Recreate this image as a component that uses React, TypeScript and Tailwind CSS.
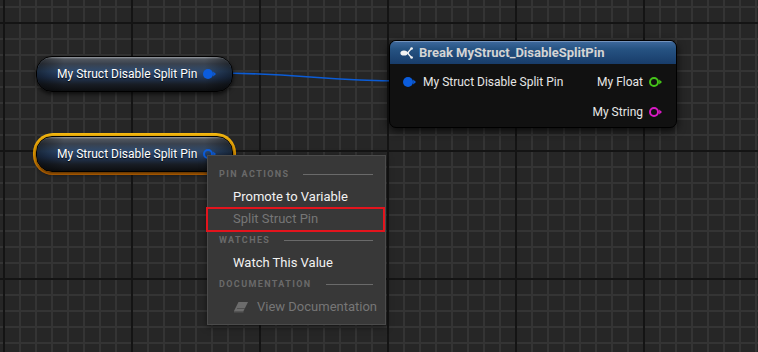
import React from "react";

const W = 758;
const H = 352;

function Grid() {
  const minorV: number[] = [];
  for (let x = 4; x < W; x += 16) minorV.push(x);
  const minorH: number[] = [];
  for (let y = 7; y < H; y += 16) minorH.push(y);
  const majorV = [4, 132, 260, 388, 516, 644];
  const majorH = [23, 151, 279];
  return (
    <svg className="absolute inset-0" width={W} height={H} viewBox={`0 0 ${W} ${H}`}>
      <rect width={W} height={H} fill="#262626" />
      {minorV.map((x) => (
        <rect key={"v" + x} x={x - 1} y={0} width={2} height={H} fill="#343434" />
      ))}
      {minorH.map((y) => (
        <rect key={"h" + y} x={0} y={y - 1} width={W} height={2} fill="#343434" />
      ))}
      {majorV.map((x) => (
        <rect key={"V" + x} x={x - 1} y={0} width={2} height={H} fill="#141414" />
      ))}
      {majorH.map((y) => (
        <rect key={"H" + y} x={0} y={y - 1} width={W} height={2} fill="#141414" />
      ))}
    </svg>
  );
}

function Pin({ color, filled }: { color: string; filled?: boolean }) {
  return (
    <svg width="14" height="12" viewBox="0 0 14 12" className="block shrink-0">
      {filled ? (
        <circle cx="5" cy="6" r="5" fill={color} />
      ) : (
        <circle cx="5" cy="6" r="4" fill="none" stroke={color} strokeWidth="2" />
      )}
      <path d="M10.2 3.6 L13 6 L10.2 8.4 Z" fill={color} />
    </svg>
  );
}

function VarNode({ hollow }: { hollow?: boolean }) {
  return (
    <div className="relative w-[197px] h-[36px] rounded-[16px] border border-black bg-[linear-gradient(180deg,#9a9ea4_0%,#50565e_6%,#3a424e_20%,#2e4a6e_42%,#23395a_58%,#181d25_80%,#0d0e10_100%)] shadow-[0_2px_4px_rgba(0,0,0,0.7)] flex items-center pl-[20px] overflow-hidden">
      <div className="absolute inset-0 rounded-[16px] bg-[linear-gradient(90deg,rgba(0,0,0,0.45)_0%,rgba(0,0,0,0)_14%,rgba(0,0,0,0)_86%,rgba(0,0,0,0.45)_100%)]" />
      <span className="relative text-[12px] leading-none text-white whitespace-nowrap [text-shadow:0_1px_1px_rgba(0,0,0,0.8)]">
        My Struct Disable Split Pin
      </span>
      <span className="relative ml-[6px]">
        <Pin color="#0b5cdc" filled={!hollow} />
      </span>
    </div>
  );
}

function BreakIcon() {
  return (
    <svg width="14" height="14" viewBox="0 0 14 14" className="block shrink-0">
      <ellipse cx="4" cy="7" rx="3.6" ry="2.6" fill="#f2f2f2" />
      <path d="M6.5 7 L8.5 7 M8 6.4 L10.8 3.2 M8 7.6 L10.8 10.8" stroke="#f2f2f2" strokeWidth="1.4" strokeLinecap="round" />
      <circle cx="11.6" cy="2.5" r="1.3" fill="#f2f2f2" />
      <circle cx="11.6" cy="11.5" r="1.3" fill="#f2f2f2" />
    </svg>
  );
}

function BookIcon() {
  return (
    <svg width="16" height="13" viewBox="0 0 16 13" className="block shrink-0">
      <path d="M1 11 L5.5 2 L15 2 L10.5 11 Z" fill="#6c6c6c" />
      <path d="M1 11 L10.5 11 L10.5 12.5 L1 12.5 Z" fill="#555" />
      <path d="M4 8.5 L12 8.5" stroke="#4a4a4a" strokeWidth="0.8" />
    </svg>
  );
}

function SectionHeader({ label }: { label: string }) {
  return (
    <div className="h-[22px] flex items-center pl-[11px] pr-[12px]">
      <span className="text-[9px] font-bold tracking-[1.4px] text-[#6a6a6a] leading-none whitespace-nowrap">{label}</span>
      <div className="flex-1 h-px bg-[#6a6a6a] ml-[14px]" />
    </div>
  );
}

function MenuItem({ label, disabled }: { label: string; disabled?: boolean }) {
  return (
    <div className="h-[22px] flex items-center pl-[25px]">
      <span className={`text-[13px] leading-none whitespace-nowrap ${disabled ? "text-[#767676]" : "text-[#f2f2f2]"}`}>{label}</span>
    </div>
  );
}

export default function App() {
  return (
    <div className="relative w-[758px] h-[352px] overflow-hidden bg-[#262626] font-['Roboto','Noto_Sans',sans-serif]">
      <Grid />

      {/* wire */}
      <svg className="absolute inset-0" width={W} height={H} viewBox={`0 0 ${W} ${H}`}>
        <path d="M214 73 C 300 73, 320 81, 404 81" fill="none" stroke="#0b5cd6" strokeWidth="1.6" />
      </svg>

      {/* node 1 */}
      <div className="absolute left-[36px] top-[56px]">
        <VarNode />
      </div>

      {/* node 2 selected */}
      <div className="absolute left-[33px] top-[133px] w-[203px] h-[42px] rounded-[20px] p-[3px] bg-[linear-gradient(180deg,#f8bb10_0%,#efa000_50%,#e27600_100%)]">
        <VarNode hollow />
      </div>

      {/* break node */}
      <div className="absolute left-[389px] top-[40px] w-[288px] h-[88px] rounded-[7px] border border-black bg-[#111111] shadow-[0_3px_8px_rgba(0,0,0,0.75)] overflow-hidden flex flex-col">
        <div className="h-[23px] shrink-0 flex items-center pl-[10px] gap-[5px] bg-[linear-gradient(180deg,#3f6a9e_0%,#265382_35%,#183c6a_100%)] shadow-[inset_0_1px_0_rgba(170,190,220,0.5)]">
          <BreakIcon />
          <span className="text-[13px] font-bold text-[#d4d4d4] leading-none whitespace-nowrap">Break MyStruct_DisableSplitPin</span>
        </div>
        <div className="flex flex-col pt-[7px] gap-[8px]">
          <div className="h-[22px] flex items-center justify-between pl-[13px] pr-[13px]">
            <div className="flex items-center gap-[6px]">
              <Pin color="#0b5cdc" filled />
              <span className="text-[12px] leading-none text-[#e6e6e6] whitespace-nowrap">My Struct Disable Split Pin</span>
            </div>
            <div className="flex items-center gap-[6px]">
              <span className="text-[12px] leading-none text-[#e6e6e6] whitespace-nowrap">My Float</span>
              <Pin color="#45c41a" />
            </div>
          </div>
          <div className="h-[22px] flex items-center justify-end pr-[13px]">
            <div className="flex items-center gap-[6px]">
              <span className="text-[12px] leading-none text-[#e6e6e6] whitespace-nowrap">My String</span>
              <Pin color="#d81ac4" />
            </div>
          </div>
        </div>
      </div>

      {/* context menu */}
      <div className="absolute left-[207px] top-[155px] w-[179px] h-[170px] bg-[#383838] border border-[#4b4b4b] pt-[7px] shadow-[0_2px_6px_rgba(0,0,0,0.5)]">
        <SectionHeader label="PIN ACTIONS" />
        <MenuItem label="Promote to Variable" />
        <MenuItem label="Split Struct Pin" disabled />
        <SectionHeader label="WATCHES" />
        <MenuItem label="Watch This Value" />
        <SectionHeader label="DOCUMENTATION" />
        <div className="h-[22px] flex items-center pl-[25px] gap-[8px]">
          <BookIcon />
          <span className="text-[13px] leading-none text-[#767676] whitespace-nowrap">View Documentation</span>
        </div>
        <div className="absolute left-[-2px] top-[51px] w-[179px] h-[25px] border-2 border-[#e3141d]" />
      </div>
    </div>
  );
}
